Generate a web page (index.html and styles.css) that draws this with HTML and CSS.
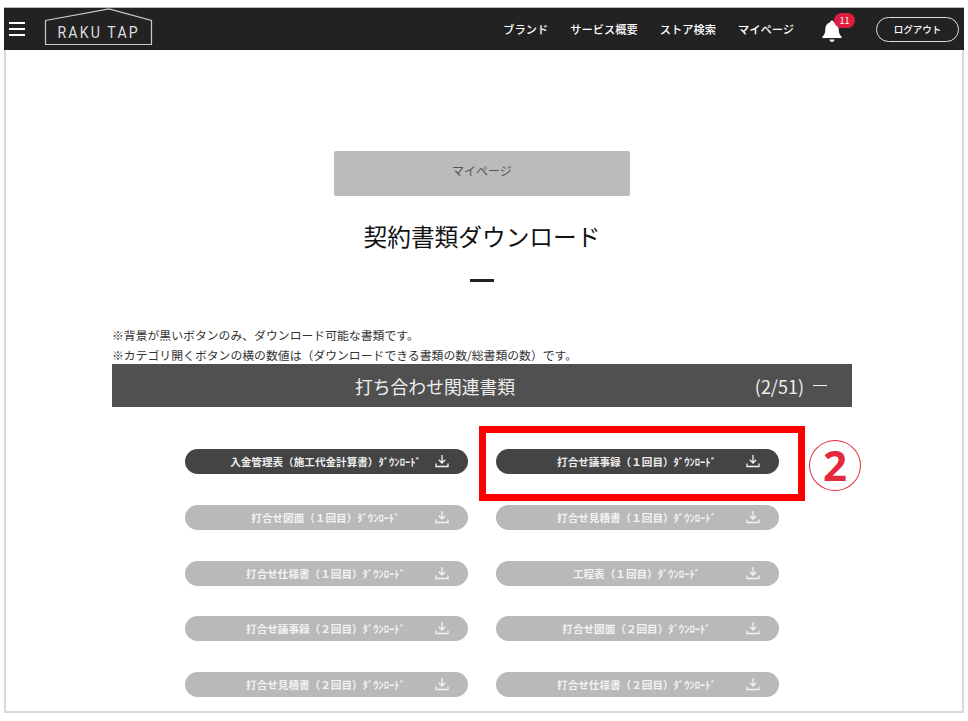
FILE: index.html
```html
<!DOCTYPE html>
<html lang="ja">
<head>
  <meta charset="UTF-8">
  <meta name="viewport" content="width=device-width, initial-scale=1.0">
  <title>契約書類ダウンロード</title>
  <link rel="stylesheet" href="styles.css">
</head>
<body>
  <div class="frame">
    <header class="topbar">
      <button class="menu-btn" aria-label="menu">
        <span></span><span></span><span></span>
      </button>
      <a class="logo">
        <svg class="logo-house" width="110" height="39" viewBox="0 0 110 39" fill="none" stroke="#ccc" stroke-width="1.2">
          <path d="M1.5 12.5 L65 0.8 L107.500 12.500 V36.500 H1.500 Z"/>
        </svg>
        <span class="logo-text">RAKU TAP</span>
      </a>
      <nav class="topnav">
        <a>ブランド</a>
        <a>サービス概要</a>
        <a>ストア検索</a>
        <a>マイページ</a>
      </nav>
      <div class="bell">
        <svg width="22" height="24" viewBox="0 0 22 24" fill="#fff">
          <path d="M11 1.500 C12 1.500 12.700 2.200 12.700 3.200 C16 4 17.700 6.800 17.700 10 C17.700 14 18.500 15.800 20.500 17.500 V19 H1.500 V17.500 C3.500 15.800 4.300 14 4.300 10 C4.300 6.800 6 4 9.300 3.200 C9.300 2.200 10 1.500 11 1.500 Z"/>
          <path d="M8.500 20.500 H13.500 C13.300 22 12.300 23 11 23 C9.700 23 8.700 22 8.500 20.500 Z"/>
        </svg>
        <span class="badge">11</span>
      </div>
      <a class="logout">ログアウト</a>
    </header>

    <main class="content">
      <a class="mypage-btn">マイページ</a>
      <h1 class="page-title">契約書類ダウンロード</h1>
      <div class="title-rule"></div>

      <div class="notes">
        <p>※背景が黒いボタンのみ、ダウンロード可能な書類です。</p>
        <p>※カテゴリ開くボタンの横の数値は（ダウンロードできる書類の数/総書類の数）です。</p>
      </div>

      <section class="category">
        <div class="category-bar">
          <h2>打ち合わせ関連書類</h2>
          <span class="count">(2/51)</span>
          <span class="collapse"></span>
        </div>
        <div class="doc-grid" id="docGrid">
          <a class="doc-btn active"><span class="doc-label">入金管理表（施工代金計算書）ﾀﾞｳﾝﾛｰﾄﾞ</span><svg class="dl" viewBox="0 0 14 14"><path d="M7 1 V9 M3.800 5.800 L7 9 L10.200 5.800 M1 9.500 V12.500 H13 V9.500"/></svg></a>
          <a class="doc-btn active"><span class="doc-label">打合せ議事録（１回目）ﾀﾞｳﾝﾛｰﾄﾞ</span><svg class="dl" viewBox="0 0 14 14"><path d="M7 1 V9 M3.800 5.800 L7 9 L10.200 5.800 M1 9.500 V12.500 H13 V9.500"/></svg></a>
          <a class="doc-btn"><span class="doc-label">打合せ図面（１回目）ﾀﾞｳﾝﾛｰﾄﾞ</span><svg class="dl" viewBox="0 0 14 14"><path d="M7 1 V9 M3.800 5.800 L7 9 L10.200 5.800 M1 9.500 V12.500 H13 V9.500"/></svg></a>
          <a class="doc-btn"><span class="doc-label">打合せ見積書（１回目）ﾀﾞｳﾝﾛｰﾄﾞ</span><svg class="dl" viewBox="0 0 14 14"><path d="M7 1 V9 M3.800 5.800 L7 9 L10.200 5.800 M1 9.500 V12.500 H13 V9.500"/></svg></a>
          <a class="doc-btn"><span class="doc-label">打合せ仕様書（１回目）ﾀﾞｳﾝﾛｰﾄﾞ</span><svg class="dl" viewBox="0 0 14 14"><path d="M7 1 V9 M3.800 5.800 L7 9 L10.200 5.800 M1 9.500 V12.500 H13 V9.500"/></svg></a>
          <a class="doc-btn"><span class="doc-label">工程表（１回目）ﾀﾞｳﾝﾛｰﾄﾞ</span><svg class="dl" viewBox="0 0 14 14"><path d="M7 1 V9 M3.800 5.800 L7 9 L10.200 5.800 M1 9.500 V12.500 H13 V9.500"/></svg></a>
          <a class="doc-btn"><span class="doc-label">打合せ議事録（２回目）ﾀﾞｳﾝﾛｰﾄﾞ</span><svg class="dl" viewBox="0 0 14 14"><path d="M7 1 V9 M3.800 5.800 L7 9 L10.200 5.800 M1 9.500 V12.500 H13 V9.500"/></svg></a>
          <a class="doc-btn"><span class="doc-label">打合せ図面（２回目）ﾀﾞｳﾝﾛｰﾄﾞ</span><svg class="dl" viewBox="0 0 14 14"><path d="M7 1 V9 M3.800 5.800 L7 9 L10.200 5.800 M1 9.500 V12.500 H13 V9.500"/></svg></a>
          <a class="doc-btn"><span class="doc-label">打合せ見積書（２回目）ﾀﾞｳﾝﾛｰﾄﾞ</span><svg class="dl" viewBox="0 0 14 14"><path d="M7 1 V9 M3.800 5.800 L7 9 L10.200 5.800 M1 9.500 V12.500 H13 V9.500"/></svg></a>
          <a class="doc-btn"><span class="doc-label">打合せ仕様書（２回目）ﾀﾞｳﾝﾛｰﾄﾞ</span><svg class="dl" viewBox="0 0 14 14"><path d="M7 1 V9 M3.800 5.800 L7 9 L10.200 5.800 M1 9.500 V12.500 H13 V9.500"/></svg></a>
        </div>
      </section>
    </main>

    <!-- annotation on top of the screenshot -->
    <div class="callout-box"></div>
    <div class="callout-num">2</div>
  </div>
</body>
</html>
```

FILE: styles.css
```css
html, body {
  margin: 0;
  padding: 0;
  background: #fff;
}
body {
  font-family: "Noto Sans CJK JP", "Noto Sans", sans-serif;
  color: #222;
  width: 968px;
  height: 721px;
  overflow: hidden;
}
.frame {
  position: relative;
  margin: 7px 4px 0;
  width: 960px;
  height: 706px;
  box-sizing: border-box;
  border-top: 1px solid #bbb;
  border-bottom: 2px solid #d8d8d8;
  box-shadow: inset 2px 0 0 #d8d8d8, inset -2px 0 0 #d8d8d8;
}
p, h1, h2 {
  margin: 0;
  font-weight: normal;
}

/* header */
.topbar {
  display: flex;
  align-items: center;
  height: 42px;
  background: #222;
  color: #fff;
}
.menu-btn {
  display: flex;
  flex-direction: column;
  gap: 4px;
  width: 16px;
  margin-left: 5px;
  padding: 0;
  border: none;
  background: none;
}
.menu-btn span {
  display: block;
  height: 2px;
  background: #fff;
}
.logo {
  position: relative;
  display: flex;
  align-items: center;
  justify-content: center;
  width: 110px;
  height: 39px;
  margin: -3px 0 0 19px;
}
.logo-house {
  position: absolute;
  left: 0;
  top: 0;
}
.logo-text {
  position: relative;
  top: 4px;
  font-family: "Roboto", sans-serif;
  font-size: 17px;
  letter-spacing: 2.6px;
  white-space: nowrap;
  transform: scaleX(0.83);
  color: #ddd;
}
.topnav {
  display: flex;
  gap: 22px;
  margin-left: auto;
  font-size: 11.250px;
  font-weight: 500;
}
.bell {
  position: relative;
  width: 22px;
  height: 24px;
  margin: 3px 0 0 27px;
}
.bell svg {
  display: block;
}
.badge {
  position: absolute;
  left: 13px;
  top: -6px;
  width: 21px;
  height: 15px;
  border-radius: 8px;
  background: #dc1e41;
  font-size: 9px;
  line-height: 15px;
  text-align: center;
}
.logout {
  width: 81px;
  height: 23px;
  margin: 0 5px 0 33px;
  border: 1px solid #ddd;
  border-radius: 13px;
  font-size: 9.500px;
  font-weight: 500;
  line-height: 23px;
  text-align: center;
}

/* main */
.content {
  display: flex;
  flex-direction: column;
  padding: 101px 112px 0 108px;
}
.mypage-btn {
  align-self: center;
  width: 296px;
  height: 45px;
  padding-top: 11px;
  box-sizing: border-box;
  border-radius: 2px;
  background: #bbb;
  color: #555;
  font-size: 12px;
  line-height: 18px;
  text-align: center;
}
.page-title {
  margin-top: 22px;
  font-size: 23.700px;
  line-height: 36px;
  text-align: center;
  color: #111;
}
.title-rule {
  align-self: center;
  width: 24px;
  height: 3px;
  margin-top: 25px;
  background: #222;
}
.notes {
  margin-top: 43px;
  font-size: 11.850px;
  line-height: 20px;
  color: #333;
}
.category-bar {
  position: relative;
  display: flex;
  align-items: center;
  height: 43px;
  margin-top: -1px;
  background: #505050;
  color: #eee;
}
.category-bar h2 {
  margin-left: 243px;
  font-size: 17.800px;
}
.count {
  position: absolute;
  right: 48px;
  font-size: 18px;
}
.collapse {
  position: absolute;
  right: 25px;
  width: 14px;
  height: 1.500px;
  background: #eee;
}
.doc-grid {
  display: grid;
  grid-template-columns: 283px 283px;
  column-gap: 28px;
  row-gap: 30.750px;
  justify-content: center;
  margin: 42px 0 0 0;
}
.doc-btn {
  position: relative;
  display: flex;
  align-items: center;
  justify-content: center;
  height: 25px;
  border-radius: 13px;
  background: #b9b9b9;
  color: #f2f2f2;
  font-size: 10.600px;
  font-weight: 700;
}
.doc-btn.active {
  background: #444;
  color: #eee;
}
.doc-label {
  padding-right: 2px;
}
.dl {
  position: absolute;
  right: 19px;
  top: 5px;
  width: 14px;
  height: 14px;
  fill: none;
  stroke: #f2f2f2;
  stroke-width: 1.300;
}

/* red annotation */
.callout-box {
  position: absolute;
  left: 475px;
  top: 418px;
  width: 326px;
  height: 75px;
  box-sizing: border-box;
  border: 7px solid #f00;
}
.callout-num {
  position: absolute;
  left: 805px;
  top: 432px;
  width: 52px;
  height: 51px;
  border: 1.500px solid #e6283c;
  border-radius: 50%;
  box-sizing: border-box;
  color: #e6283c;
  font-family: "Noto Sans", sans-serif;
  font-size: 42px;
  font-weight: 700;
  line-height: 47px;
  text-align: center;
}
```
